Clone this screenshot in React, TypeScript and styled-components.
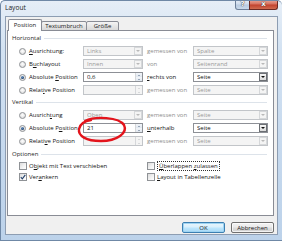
import React from 'react';
import styled, { createGlobalStyle } from 'styled-components';

const Global = createGlobalStyle`
  html, body { margin: 0; padding: 0; background: #ffffff; }
  body { font-family: "Open Sans", "Noto Sans", sans-serif; -webkit-font-smoothing: antialiased; }
  * { box-sizing: border-box; }
`;

const Window = styled.div`
  position: relative;
  width: 282px;
  height: 241px;
  display: flex;
  flex-direction: column;
  background: linear-gradient(180deg, #e6eef7 0%, #d3e2f2 20%, #c6d9ee 60%, #bcd2ea 100%);
  border: 1px solid #6f88a6;
  border-right: none;
  border-radius: 5px 5px 0 0;
  overflow: hidden;
`;

const TitleBar = styled.div`
  height: 15px;
  display: flex;
  align-items: flex-start;
  justify-content: space-between;
  padding: 0 4px 0 4px;
`;

const Title = styled.span`
  font-size: 6.6px;
  color: #1b1b1b;
  line-height: 14px;
`;

const Caption = styled.div`
  display: flex;
  margin-top: -1px;
`;

const CapBtn = styled.div<{ $close?: boolean }>`
  width: ${p => (p.$close ? 29 : 15)}px;
  height: 10px;
  display: flex;
  align-items: center;
  justify-content: center;
  border: 1px solid ${p => (p.$close ? '#6b2a24' : '#6c7f99')};
  border-top: none;
  border-radius: ${p => (p.$close ? '0 0 3px 0' : '0 0 0 3px')};
  margin-left: ${p => (p.$close ? '-1px' : '0')};
  background: ${p =>
    p.$close
      ? 'linear-gradient(180deg, #e9a99b 0%, #d7715f 45%, #c2432f 55%, #cf6a4f 100%)'
      : 'linear-gradient(180deg, #e7eef7 0%, #cfdcec 45%, #b9cbe1 55%, #c9d9ea 100%)'};
  color: #ffffff;
  font-size: 7px;
  font-weight: 700;
  font-family: "DejaVu Sans", sans-serif;
  line-height: 1;
  text-shadow: 0 0 1px #333, 0 0 1px #333;
`;

const Body = styled.div`
  flex: 1;
  margin: 0 4px 5px 4px;
  background: #f0f0f0;
  border: 1px solid #8d9db2;
  display: flex;
  flex-direction: column;
  padding: 2px 3px 1px 1px;
`;

const TabStrip = styled.div`
  display: flex;
  align-items: flex-end;
  height: 12px;
  margin: 0 0 -1px 1px;
  position: relative;
  z-index: 1;
`;

const Tab = styled.div<{ $active?: boolean; $w: number }>`
  width: ${p => p.$w}px;
  height: ${p => (p.$active ? 12 : 10)}px;
  margin-right: -1px;
  border: 1px solid #898c95;
  border-bottom: ${p => (p.$active ? 'none' : '1px solid #898c95')};
  border-radius: 2px 2px 0 0;
  background: ${p => (p.$active ? '#ffffff' : 'linear-gradient(180deg, #f4f4f4 0%, #e6e6e6 50%, #d9d9d9 100%)')};
  font-size: 6px;
  color: #1a1a1a;
  display: flex;
  align-items: center;
  justify-content: center;
  position: relative;
  z-index: ${p => (p.$active ? 2 : 1)};
  padding-bottom: ${p => (p.$active ? 1 : 0)}px;
`;

const Panel = styled.div`
  height: 186px;
  background: #ffffff;
  border: 1px solid #898c95;
  padding: 2px 6px 0 0;
  display: flex;
  flex-direction: column;
`;

const GroupHeader = styled.div<{ $mt: number }>`
  display: flex;
  align-items: center;
  height: 8px;
  margin-top: ${p => p.$mt}px;
  padding-left: 4px;
  font-size: 6px;
  color: #1e1e1e;
  &::after {
    content: '';
    flex: 1;
    height: 1px;
    margin-left: 3px;
    background: #dde3ea;
  }
`;

const Rows = styled.div<{ $mt: number; $gap: number }>`
  display: flex;
  flex-direction: column;
  gap: ${p => p.$gap}px;
  margin-top: ${p => p.$mt}px;
`;

const Row = styled.div`
  display: grid;
  grid-template-columns: 10px 54px 60px 50px 75px;
  align-items: center;
  height: 10px;
  padding-left: 11px;
`;

const Text = styled.span<{ $dim?: boolean; $pad?: number }>`
  font-size: 6px;
  color: ${p => (p.$dim ? '#8e8e8e' : '#141414')};
  white-space: nowrap;
  padding-left: ${p => p.$pad ?? 0}px;
  u { text-decoration-thickness: 0.5px; text-underline-offset: 1px; }
`;

const Radio = styled.span<{ $on?: boolean }>`
  width: 7px;
  height: 7px;
  border-radius: 50%;
  border: 1px solid #8f9296;
  background: radial-gradient(circle at 50% 40%, #ffffff 0%, #e6e6e6 60%, #cfcfcf 100%);
  display: flex;
  align-items: center;
  justify-content: center;
  &::after {
    content: '';
    display: ${p => (p.$on ? 'block' : 'none')};
    width: 3px;
    height: 3px;
    border-radius: 50%;
    background: radial-gradient(circle at 40% 35%, #6d9ccf 0%, #1d3f6b 70%, #122a4a 100%);
  }
`;

const Field = styled.div<{ $on?: boolean; $w: number }>`
  width: ${p => p.$w}px;
  height: 10px;
  display: flex;
  align-items: center;
  border: 1px solid ${p => (p.$on ? '#8d9096' : '#c2c5c9')};
  background: ${p => (p.$on ? '#ffffff' : '#f4f4f4')};
  font-size: 6px;
  color: ${p => (p.$on ? '#111111' : '#9a9a9a')};
  padding-left: 3px;
`;

const FieldText = styled.span`
  flex: 1;
  white-space: nowrap;
  overflow: hidden;
`;

const DropBtn = styled.span<{ $on?: boolean }>`
  width: 8px;
  height: 8px;
  display: flex;
  align-items: center;
  justify-content: center;
  border: 1px solid ${p => (p.$on ? '#6c6f74' : '#d6d8da')};
  background: ${p => (p.$on ? 'linear-gradient(180deg, #f6f6f6, #dcdcdc)' : '#f4f4f4')};
  &::after {
    content: '';
    border-left: 2px solid transparent;
    border-right: 2px solid transparent;
    border-top: 2px solid ${p => (p.$on ? '#111111' : '#b9b9b9')};
  }
`;

const Spin = styled.span`
  width: 7px;
  height: 8px;
  display: flex;
  flex-direction: column;
  border-left: 1px solid #d5d7da;
`;

const SpinHalf = styled.span<{ $up?: boolean; $on?: boolean }>`
  flex: 1;
  display: flex;
  align-items: center;
  justify-content: center;
  background: ${p => (p.$on ? 'linear-gradient(180deg, #f3f6fa, #dfe6ee)' : '#f4f4f4')};
  &::after {
    content: '';
    border-left: 1.5px solid transparent;
    border-right: 1.5px solid transparent;
    ${p => (p.$up ? 'border-bottom' : 'border-top')}: 1.5px solid ${p => (p.$on ? '#4a6180' : '#b9bdc2')};
  }
`;

const CheckRows = styled.div`
  display: grid;
  grid-template-columns: 128px 1fr;
  row-gap: 2px;
  margin-top: 3px;
  padding-left: 11px;
`;

const CheckItem = styled.div`
  display: flex;
  align-items: center;
  height: 9px;
  gap: 2px;
`;

const Box = styled.span`
  width: 8px;
  height: 8px;
  flex: none;
  border: 1px solid #8f9296;
  background: linear-gradient(135deg, #dcdcdc 0%, #f4f4f4 60%, #ffffff 100%);
  display: flex;
  align-items: center;
  justify-content: center;
`;

const Focus = styled.span`
  display: inline-block;
  outline: 1px dotted #333333;
  outline-offset: 0;
  padding: 0 1px;
  margin-left: 1px;
  line-height: 8px;
`;

const Footer = styled.div`
  display: flex;
  justify-content: flex-end;
  gap: 6px;
  margin-top: 6px;
`;

const Button = styled.div<{ $def?: boolean }>`
  width: 43px;
  height: 11px;
  border-radius: 2px;
  border: 1px solid ${p => (p.$def ? '#3c7fb1' : '#707070')};
  background: ${p =>
    p.$def
      ? 'linear-gradient(180deg, #eaf6fd 0%, #d9f0fc 45%, #bee6fd 55%, #a7d9f5 100%)'
      : 'linear-gradient(180deg, #f2f2f2 0%, #ebebeb 45%, #dddddd 55%, #cfcfcf 100%)'};
  box-shadow: inset 0 0 0 1px ${p => (p.$def ? '#9fd4f2' : 'rgba(255,255,255,0.7)')};
  font-size: 6px;
  color: #1a1a1a;
  display: flex;
  align-items: center;
  justify-content: center;
`;

const Marker = styled.svg`
  position: absolute;
  left: 76px;
  top: 116px;
  overflow: visible;
`;

type RowData = {
  on: boolean;
  label: React.ReactNode;
  spin?: boolean;
  val: string;
  valOn: boolean;
  label2: React.ReactNode;
  label2On: boolean;
  val2: string;
  val2On: boolean;
};

const horizontal: RowData[] = [
  { on: false, label: <><u>A</u>usrichtung:</>, val: 'Links', valOn: false, label2: 'gemessen von', label2On: false, val2: 'Spalte', val2On: false },
  { on: false, label: <>B<u>u</u>chlayout</>, val: 'Innen', valOn: false, label2: 'von', label2On: false, val2: 'Seitenrand', val2On: false },
  { on: true, label: <>Absolute <u>P</u>osition</>, spin: true, val: '0,6', valOn: true, label2: <><u>r</u>echts von</>, label2On: true, val2: 'Seite', val2On: true },
  { on: false, label: <>Relat<u>i</u>ve Position</>, spin: true, val: '', valOn: false, label2: 'gemessen von', label2On: false, val2: 'Seite', val2On: false },
];

const vertical: RowData[] = [
  { on: false, label: <>Ausrich<u>t</u>ung</>, val: 'Oben', valOn: false, label2: 'gemessen von', label2On: false, val2: 'Seite', val2On: false },
  { on: true, label: <>Absolute P<u>o</u>sition</>, spin: true, val: '21', valOn: true, label2: <><u>u</u>nterhalb</>, label2On: true, val2: 'Seite', val2On: true },
  { on: false, label: <>Relati<u>v</u>e Position</>, spin: true, val: '', valOn: false, label2: 'gemessen von', label2On: false, val2: 'Seite', val2On: false },
];

const PosRow: React.FC<{ d: RowData }> = ({ d }) => (
  <Row>
    <Radio $on={d.on} />
    <Text>{d.label}</Text>
    <Field $w={60} $on={d.valOn}>
      <FieldText>{d.val}</FieldText>
      {d.spin ? (
        <Spin>
          <SpinHalf $up $on={d.valOn} />
          <SpinHalf $on={d.valOn} />
        </Spin>
      ) : (
        <DropBtn $on={d.valOn} />
      )}
    </Field>
    <Text $dim={!d.label2On} $pad={4}>{d.label2}</Text>
    <Field $w={75} $on={d.val2On}>
      <FieldText>{d.val2}</FieldText>
      <DropBtn $on={d.val2On} />
    </Field>
  </Row>
);

const Check = () => (
  <svg width="6" height="6" viewBox="0 0 6 6">
    <path d="M0.8 3.2 L2.3 4.8 L5.3 0.9" fill="none" stroke="#22406a" strokeWidth="1.1" />
  </svg>
);

export default function App() {
  return (
    <>
      <Global />
      <Window>
        <TitleBar>
          <Title>Layout</Title>
          <Caption>
            <CapBtn>?</CapBtn>
            <CapBtn $close>x</CapBtn>
          </Caption>
        </TitleBar>
        <Body>
          <TabStrip>
            <Tab $active $w={34}>Position</Tab>
            <Tab $w={46}>Textumbruch</Tab>
            <Tab $w={33}>Größe</Tab>
          </TabStrip>
          <Panel>
            <GroupHeader $mt={1}>Horizontal</GroupHeader>
            <Rows $mt={4} $gap={3}>
              {horizontal.map((d, i) => <PosRow key={i} d={d} />)}
            </Rows>
            <GroupHeader $mt={3}>Vertikal</GroupHeader>
            <Rows $mt={4} $gap={3}>
              {vertical.map((d, i) => <PosRow key={i} d={d} />)}
            </Rows>
            <GroupHeader $mt={4}>Optionen</GroupHeader>
            <CheckRows>
              <CheckItem><Box /><Text>O<u>b</u>jekt mit Text verschieben</Text></CheckItem>
              <CheckItem><Box /><Text><Focus><u>Ü</u>berlappen <u>z</u>ulassen</Focus></Text></CheckItem>
              <CheckItem><Box><Check /></Box><Text>Ver<u>a</u>nkern</Text></CheckItem>
              <CheckItem><Box /><Text><u>L</u>ayout in Tabellenzelle</Text></CheckItem>
            </CheckRows>
          </Panel>
          <Footer>
            <Button $def>OK</Button>
            <Button>Abbrechen</Button>
          </Footer>
        </Body>
        <Marker width="50" height="26" viewBox="0 0 50 26">
          <path d="M8 4 C 18 -1, 42 0, 47 8 C 51 16, 40 24, 24 24 C 9 24, 1 19, 2 12 C 3 7, 8 4, 14 3" fill="none" stroke="#e3141c" strokeWidth="2.4" strokeLinecap="round" />
        </Marker>
      </Window>
    </>
  );
}
